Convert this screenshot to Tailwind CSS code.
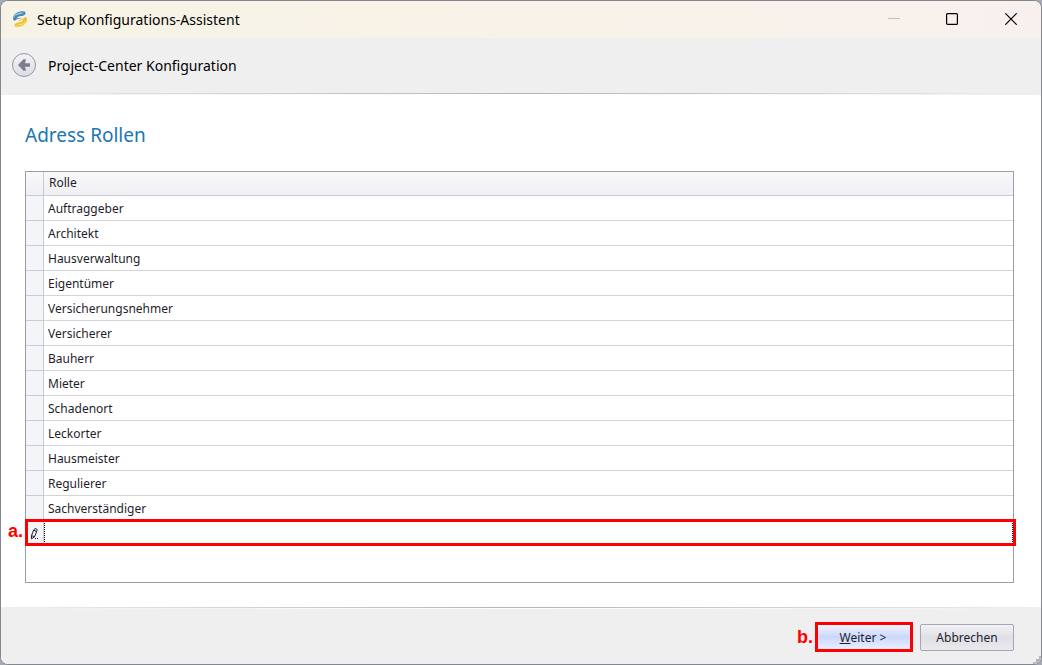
<!DOCTYPE html>
<html lang="de">
<head>
    <meta charset="UTF-8">
    <meta name="viewport" content="width=device-width, initial-scale=1.0">
    <title>Setup Konfigurations-Assistent</title>
    <script src="https://cdn.jsdelivr.net/npm/@tailwindcss/browser@4"></script>
</head>
<body class="bg-[#a3a8b2] h-screen overflow-hidden font-['Noto_Sans',sans-serif] text-[#1e1e2d]">
    <div class="relative h-full flex flex-col bg-white border border-[#85878f] rounded-lg overflow-hidden">

        <!-- Title bar -->
        <header class="h-[37px] shrink-0 flex items-center pl-[11px] pb-px bg-linear-to-r from-[#f6f3e6] via-[#f9f2e8] to-[#f8f0ed] text-black">
            <svg class="size-4 mr-[9px]" viewBox="0 0 16 16">
                <path d="M1.200 8.500C.6 4.500 4 1.300 8 .6c2.500-.5 5-.4 5.400.8.6 1.900-1.400 3.300-4.400 3.700C6.500 5.500 5 6 4.600 7.400 6.500 6.500 8.500 6.600 10 7.200c-3 0-4.800.6-6.500 2-1 .8-2 .5-2.300-.7z" fill="#4187b5"/>
                <path d="M2 6.500C2.200 3.800 5 1.800 8 1.500c2-.1 3.500 0 4.500-.6-1.500 1.800-3.500 2.200-5.500 2.500C4.700 3.700 3.200 4.800 2 6.500z" fill="#9cc3d9"/>
                <path d="M14.800 7c.8 4.300-2.400 7.500-6.400 8.400-3 .7-5.300.6-5.800-.7-.4-1.900 1.600-3 4.600-3.500 2.700-.5 3.700-1.200 4.100-2.800-1.900 1.100-3.900 1.400-5.600.6 3 0 5-.6 6.600-2.200 1-1 2.100-.9 2.500.2z" fill="#efc02a"/>
                <path d="M14 9c0 3-2.500 4.900-5.500 5.200-2 .1-3.500.1-4.600.8 1.500-1.700 3.500-2 5.300-2.300C11.500 12.400 13 11.200 14 9z" fill="#f7dc7a"/>
            </svg>
            <h1 class="grow text-sm pt-px">Setup Konfigurations-Assistent</h1>
            <button aria-label="Minimieren" class="w-[58px] h-full flex items-center justify-center" disabled>
                <svg class="size-3" viewBox="0 0 12 12" stroke="#c4bfbc"><path d="M0 5.500h12"/></svg>
            </button>
            <button aria-label="Maximieren" class="w-[58px] h-full flex items-center justify-center">
                <svg class="size-3" viewBox="0 0 12 12" fill="none" stroke="#000" stroke-width="1.2"><rect x=".6" y=".6" width="10.8" height="10.8" rx="1"/></svg>
            </button>
            <button aria-label="Schließen" class="w-[60px] h-full flex items-center justify-center">
                <svg class="size-3" viewBox="0 0 12 12" stroke="#000" stroke-width="1.2"><path d="M.3.3l11.4 11.4M11.700.3L.3 11.700"/></svg>
            </button>
        </header>

        <!-- Wizard header -->
        <div class="h-[55px] shrink-0 flex items-center gap-3 pl-[11px] pb-px bg-[#efefef] text-black">
            <button aria-label="Zurück" class="size-6 rounded-full border border-[#9496a4] bg-linear-to-b from-[#f2f2f7] to-[#dcdce4] flex items-center justify-center">
                <svg class="size-3" viewBox="0 0 12 12" fill="#7c7d8d"><path d="M0 6L5.500 .3H8L7 4.200h5v3.600H7l1 3.900H5.500z"/></svg>
            </button>
            <h2 class="text-sm pt-px">Project-Center Konfiguration</h2>
        </div>
        <div class="h-px shrink-0 bg-linear-to-r from-[#efefef] via-[#b4b4b4] to-[#efefef]"></div>
        <div class="h-px shrink-0 bg-linear-to-r from-[#efefef] via-white to-[#efefef]"></div>

        <!-- Page -->
        <main class="grow flex flex-col pl-6 pr-[27px] pt-7 pb-6">
            <h3 class="text-[19px] leading-6 text-[#1b76b5]">Adress Rollen</h3>
            <div class="relative grow mt-6 border border-[#9c9cac]">
                <table class="w-full table-fixed border-separate border-spacing-0 text-xs text-left">
                    <colgroup><col class="w-[18px]"><col></colgroup>
                    <thead>
                        <tr class="h-6 bg-linear-to-b from-[#f8f8f9] to-[#eff0f3]">
                            <th class="border-r border-b border-[#c9cad4]"></th>
                            <th class="p-0 pl-[5px] pb-px border-b border-[#c9cad4] font-normal">Rolle</th>
                        </tr>
                    </thead>
                    <tbody id="roles"></tbody>
                </table>
            </div>
        </main>

        <!-- Buttons -->
        <footer class="h-[57px] shrink-0 bg-[#efefef] text-xs">
            <div class="h-px bg-linear-to-r from-[#efefef] via-[#b4b4b4] to-[#efefef]"></div>
            <div class="h-px bg-linear-to-r from-[#efefef] via-white to-[#efefef]"></div>
            <div class="flex items-center justify-end pr-[27px] pt-[13px]">
                <span class="mr-[2px] pb-px font-['Liberation_Sans',sans-serif] font-bold text-lg leading-5 text-[#f00]">b.</span>
                <button class="w-[98px] h-[30px] mr-[7px] pt-px pr-0.5 border-3 border-[#f00] bg-linear-to-b from-[#f0f4ff] via-[#cbd8fc] to-[#e8efff]"><u>W</u>eiter &gt;</button>
                <button class="w-[94px] h-[27px] pt-px rounded-xs border border-[#a5a6b3] bg-linear-to-b from-[#f2f2f5] via-[#dfdfe5] to-[#e9e9ee]">Abbrechen</button>
            </div>
        </footer>
        <svg class="absolute right-0 bottom-0 size-2" viewBox="0 0 8 8" fill="#b5b5b9"><path d="M6 0h2v8H0V6h3V3h3z"/></svg>
    </div>

    <!-- Row being edited -->
    <template id="edit-row">
        <tr class="h-[25px]">
            <td class="relative p-0 bg-[#f4f5f8] border-r border-[#c9cad4]">
                <span class="absolute -left-[18px] -top-0.5 font-['Liberation_Sans',sans-serif] font-bold text-lg leading-6 text-[#f00]">a.</span>
                <svg class="size-3 mt-px ml-1" viewBox="0 0 12 12" fill="none" stroke="#1e1e2d"><path d="M1.500 10.800V7.500L4 1.500 5.200.6l1.600.5.2 1.500L4.500 8.800zM1.500 7.500l3 1.300M4 2.300l2.600 1.200"/><path d="M5 10.500h1M7 10.500h1"/></svg>
            </td>
            <td class="relative p-0">
                <input aria-label="Neue Rolle" class="block w-full h-[21px] px-1 border-x border-dotted border-black outline-none">
                <div class="absolute -left-[19px] -right-[3px] -top-0.5 bottom-0 border-3 border-[#f00] pointer-events-none"></div>
            </td>
        </tr>
    </template>

    <script>
        const roles = ['Auftraggeber', 'Architekt', 'Hausverwaltung', 'Eigentümer', 'Versicherungsnehmer', 'Versicherer', 'Bauherr', 'Mieter', 'Schadenort', 'Leckorter', 'Hausmeister', 'Regulierer', 'Sachverständiger'];
        const body = document.getElementById('roles');

        roles.forEach(role => {
            body.insertAdjacentHTML('beforeend', `
                <tr class="h-[25px]">
                    <td class="bg-[#f4f5f8] border-r border-b border-[#c9cad4]"></td>
                    <td class="p-0 pl-1 pt-px border-b border-[#d3d4da]">${role}</td>
                </tr>`);
        });
        body.append(document.getElementById('edit-row').content);
    </script>
</body>
</html>
